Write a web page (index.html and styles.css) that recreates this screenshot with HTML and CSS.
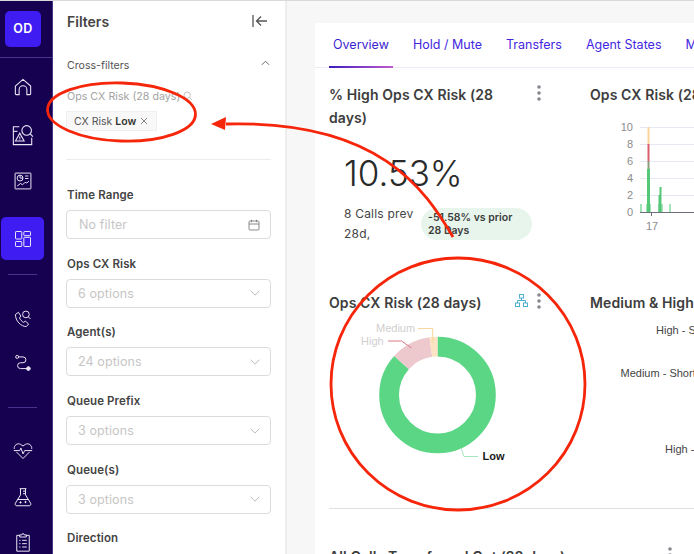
FILE: index.html
```html
<!DOCTYPE html>
<html lang="en">
<head>
  <meta charset="UTF-8">
  <meta name="viewport" content="width=device-width, initial-scale=1.0">
  <title>Ops CX Risk dashboard</title>
  <link rel="stylesheet" href="styles.css">
</head>
<body>

  <!-- left rail -->
  <nav class="rail">
    <div class="rail-logo-row">
      <div class="rail-logo">OD</div>
    </div>
    <a class="rail-item rail-home">
      <svg class="rail-icon rail-icon-sm" viewBox="0 0 20 20"><path d="M1.500 9 10 1.500 18.500 9v8.500a1 1 0 0 1-1 1h-3.200V13a4.300 4.300 0 0 0-8.600 0v5.500H2.500a1 1 0 0 1-1-1z"/></svg>
    </a>
    <a class="rail-item rail-search">
      <svg class="rail-icon rail-icon-lg" viewBox="0 0 24 24"><path d="M8 3H1.500v19.500h20V15"/><path d="M1.500 8H6"/><circle cx="16" cy="7" r="5.200"/><path d="m19.800 10.800 3 3"/><path d="M3.800 18.500 8.500 10l4.700 8.500z"/><path d="M8.500 13.500v2.500M8.500 17v.6"/></svg>
    </a>
    <a class="rail-item rail-report">
      <svg class="rail-icon" viewBox="0 0 24 24"><rect x="2.500" y="2.500" width="19" height="19" rx=".5"/><circle cx="8.500" cy="8.500" r="3.500"/><path d="M8.500 5v3.500h3.500"/><path d="M14.500 6h4M14.500 9h4"/><path d="M5 18l4-3 2.500 1.500 3-3 2 1 2.500-2.500"/></svg>
    </a>
    <a class="rail-item rail-active">
      <svg class="rail-icon" viewBox="0 0 24 24"><rect x="3" y="3" width="7.500" height="9" rx=".8"/><rect x="13" y="3" width="8" height="5" rx=".8"/><rect x="13" y="10" width="8" height="11" rx=".8"/><rect x="3" y="15" width="7.500" height="6" rx=".8"/></svg>
    </a>
    <div class="rail-divider rail-divider-a"></div>
    <a class="rail-item rail-phone">
      <svg class="rail-icon" viewBox="0 0 24 24"><path d="M3 6.500 6.500 4l3 4.500-1.700 2c.8 2.500 2.700 4.500 5 5.500l2-1.500 4 3.500-2.800 3c-6 .5-13.500-7-13-14.500z"/><circle cx="15.500" cy="6.500" r="4"/><path d="m18.500 9.500 2.500 2.500"/></svg>
    </a>
    <a class="rail-item rail-route">
      <svg class="rail-icon" viewBox="0 0 24 24"><circle cx="5" cy="3.500" r="1.800"/><path d="M6.800 3.500h5.200a3.500 3.500 0 0 1 0 7H9a3.500 3.500 0 0 0 0 7h8"/><circle class="rail-fill" cx="18.500" cy="17.500" r="2.200"/></svg>
    </a>
    <div class="rail-divider rail-divider-b"></div>
    <a class="rail-item rail-heart">
      <svg class="rail-icon" viewBox="0 0 24 24"><path d="M1.500 9.500C1 5 5.500 2 9 4l3 2 3-2c3.500-2 8 1 7.500 5.500"/><path d="M4 13l8 8 8-8"/><path d="M1 11.500h7l1.500-3 2.500 7 2-4h9"/></svg>
    </a>
    <a class="rail-item rail-flask">
      <svg class="rail-icon" viewBox="0 0 24 24"><path d="M8 2h8"/><path d="M9 2v7.500L2.800 19.500c-.7 1.500.2 3 1.700 3h15c1.500 0 2.400-1.500 1.700-3L15 9.500V2"/><path d="M5.500 15h13"/><path d="M12 5h3M12 8h3"/><circle class="rail-fill" cx="9" cy="18.500" r=".8"/><circle class="rail-fill" cx="15" cy="18" r=".8"/></svg>
    </a>
    <a class="rail-item rail-clipboard">
      <svg class="rail-icon" viewBox="0 0 24 24"><path d="M8 4H4.500v19h15V4H16"/><path d="M8 6V3.500h2.500a1.500 1.500 0 0 1 3 0H16V6z"/><path d="M7.500 10h1.500M11 10h5.500M7.500 14h1.500M11 14h5.500M7.500 18h1.500M11 18h5.500"/></svg>
    </a>
  </nav>

  <!-- filter panel -->
  <aside class="filters">
    <div class="filters-head">
      <h2 class="filters-title">Filters</h2>
      <svg class="collapse-icon" viewBox="0 0 16 14"><path d="M1 1v12M15 7H4.500M9 2.500 4.500 7 9 11.500"/></svg>
    </div>
    <div class="cross-head">
      <span>Cross-filters</span>
      <svg class="cross-chevron" viewBox="0 0 10 6"><path d="M1 5 5 1l4 4"/></svg>
    </div>
    <div class="cross-label">
      <span>Ops CX Risk (28 days)</span>
      <svg class="cross-search" viewBox="0 0 10 10"><circle cx="4.200" cy="4.200" r="3.200"/><path d="m6.600 6.600 2.600 2.600"/></svg>
    </div>
    <div class="chip">
      <span>CX Risk <b>Low</b></span>
      <svg class="chip-close" viewBox="0 0 8 8"><path d="m1 1 6 6M7 1 1 7"/></svg>
    </div>
    <div class="filters-divider"></div>

    <div class="field">
      <label class="field-label">Time Range</label>
      <div class="field-box field-box-date">
        <span>No filter</span>
        <svg class="date-icon" viewBox="0 0 12 12"><rect x="1" y="2" width="10" height="9" rx="1"/><path d="M1 5h10M3.500 .8v2.400M8.500 .8v2.400"/></svg>
      </div>
    </div>
    <div class="field">
      <label class="field-label">Ops CX Risk</label>
      <div class="field-box">
        <span>6 options</span>
        <svg class="select-icon" viewBox="0 0 10 6"><path d="m.7.7 4.300 4.500L9.300.7"/></svg>
      </div>
    </div>
    <div class="field">
      <label class="field-label">Agent(s)</label>
      <div class="field-box">
        <span>24 options</span>
        <svg class="select-icon" viewBox="0 0 10 6"><path d="m.7.7 4.300 4.500L9.300.7"/></svg>
      </div>
    </div>
    <div class="field">
      <label class="field-label">Queue Prefix</label>
      <div class="field-box">
        <span>3 options</span>
        <svg class="select-icon" viewBox="0 0 10 6"><path d="m.7.7 4.300 4.500L9.300.7"/></svg>
      </div>
    </div>
    <div class="field">
      <label class="field-label">Queue(s)</label>
      <div class="field-box">
        <span>3 options</span>
        <svg class="select-icon" viewBox="0 0 10 6"><path d="m.7.7 4.300 4.500L9.300.7"/></svg>
      </div>
    </div>
    <div class="field">
      <label class="field-label">Direction</label>
    </div>
  </aside>

  <!-- dashboard -->
  <main class="main">
    <div class="card">
      <div class="tabs">
        <a class="tab tab-active">Overview</a>
        <a class="tab">Hold / Mute</a>
        <a class="tab">Transfers</a>
        <a class="tab">Agent States</a>
        <a class="tab">Metrics</a>
      </div>

      <div class="widget-row widget-row-top">
        <section class="widget">
          <div class="widget-head">
            <h3 class="widget-title">% High Ops CX Risk (28 days)</h3>
            <svg class="kebab" viewBox="0 0 4 16"><circle cx="2" cy="2" r="1.800"/><circle cx="2" cy="8" r="1.800"/><circle cx="2" cy="14" r="1.800"/></svg>
          </div>
          <div class="metric">
            <div class="metric-value">10.53%</div>
            <div class="metric-foot">
              <div class="metric-prev">8 Calls prev 28d,</div>
              <div class="metric-pill">-51.58% vs prior 28 Days</div>
            </div>
          </div>
        </section>
        <section class="widget">
          <div class="widget-head">
            <h3 class="widget-title widget-title-line">Ops CX Risk (28 days)</h3>
          </div>
          <svg class="bar-chart" viewBox="0 0 104 122">
            <g class="grid-lines">
              <path d="M50 11.500H104M50 28.500H104M50 45.500H104M50 62.500H104M50 79.500H104"/>
            </g>
            <g class="axis-labels">
              <text x="43" y="15">10</text>
              <text x="43" y="32">8</text>
              <text x="43" y="49">6</text>
              <text x="43" y="66">4</text>
              <text x="43" y="83">2</text>
              <text x="43" y="100">0</text>
            </g>
            <rect class="bar-low-light" x="50" y="88" width="2" height="8"/>
            <rect class="bar-low-light" x="56" y="88" width="5" height="8"/>
            <rect class="bar-low-light" x="68" y="88" width="5" height="8"/>
            <rect class="bar-low-light" x="79" y="88" width="2" height="8"/>
            <rect class="bar-medium" x="57.500" y="11" width="2" height="17"/>
            <rect class="bar-high" x="57.500" y="28" width="2" height="17"/>
            <rect class="bar-mixed" x="57.500" y="45" width="2" height="8"/>
            <rect class="bar-low" x="57" y="53" width="3" height="43"/>
            <rect class="bar-low" x="68.500" y="79" width="2" height="17"/>
            <rect class="bar-low" x="69.500" y="71" width="2" height="25"/>
            <path class="axis-line" d="M50 96.500H104M61.500 96v4"/>
            <text class="axis-tick" x="62" y="114">17</text>
          </svg>
        </section>
      </div>

      <div class="widget-row widget-row-mid">
        <section class="widget">
          <div class="widget-head">
            <h3 class="widget-title widget-title-line">Ops CX Risk (28 days)</h3>
            <svg class="tree-icon" viewBox="0 0 13 13"><rect x="4.500" y=".5" width="4" height="3.500"/><rect x=".5" y="9" width="4" height="3.500"/><rect x="8.500" y="9" width="4" height="3.500"/><path d="M6.500 4v2.500M2.500 9V6.500h8V9"/></svg>
            <svg class="kebab" viewBox="0 0 4 16"><circle cx="2" cy="2" r="1.800"/><circle cx="2" cy="8" r="1.800"/><circle cx="2" cy="14" r="1.800"/></svg>
          </div>
          <svg class="donut" viewBox="0 0 200 150">
            <g transform="rotate(-90 108.500 81)" fill="none" stroke-width="19.800">
              <circle class="slice-low" cx="108.500" cy="81" r="48.400" pathLength="360" stroke-dasharray="312 360"/>
              <circle class="slice-high" cx="108.500" cy="81" r="48.400" pathLength="360" stroke-dasharray="40 360" stroke-dashoffset="-312"/>
              <circle class="slice-medium" cx="108.500" cy="81" r="48.400" pathLength="360" stroke-dasharray="8 360" stroke-dashoffset="-352"/>
            </g>
            <path class="leader-medium" d="M89 14.500h14.500l.5 14"/>
            <path class="leader-high" d="M59 27h13.500l10 7"/>
            <path class="leader-low" d="M132 134l3 8.500h14"/>
            <text class="donut-label" x="47" y="18">Medium</text>
            <text class="donut-label" x="32" y="31">High</text>
            <text class="donut-label-strong" x="153.500" y="146">Low</text>
          </svg>
        </section>
        <section class="widget">
          <div class="widget-head">
            <h3 class="widget-title widget-title-line">Medium &amp; High Risk</h3>
          </div>
          <svg class="hbar-chart" viewBox="0 0 104 150">
            <text x="66" y="20">High - Short</text>
            <text x="30.500" y="63">Medium - Short</text>
            <text x="75" y="139">High - Long</text>
          </svg>
        </section>
      </div>

      <div class="widget-row widget-row-bottom">
        <section class="widget widget-wide">
          <div class="widget-head">
            <h3 class="widget-title widget-title-line">All Calls Transferred Out (28 days)</h3>
            <svg class="kebab" viewBox="0 0 4 16"><circle cx="2" cy="2" r="1.800"/><circle cx="2" cy="8" r="1.800"/><circle cx="2" cy="14" r="1.800"/></svg>
          </div>
        </section>
      </div>
    </div>
  </main>

  <!-- red hand-drawn markup on top of the screenshot -->
  <svg class="markup" viewBox="0 0 694 554">
    <ellipse cx="121.500" cy="112" rx="74" ry="29" transform="rotate(2 121.500 112)"/>
    <ellipse cx="458" cy="384" rx="127" ry="126"/>
    <path d="M453 237C425 190 380 120 226 124"/>
    <path class="markup-head" d="M211 124 226 117 225 130z"/>
  </svg>

</body>
</html>
```

FILE: styles.css
```css
* {
  box-sizing: border-box;
}

html, body {
  height: 554px;
}

body {
  margin: 0;
  position: relative;
  display: flex;
  overflow: hidden;
  font-family: Inter, "Liberation Sans", sans-serif;
  color: #3d3d3d;
  background-color: #f7f7f7;
  border-top: 1px solid #d9d9d9;
}

h2, h3 {
  margin: 0;
}

/* left rail */
.rail {
  flex: 0 0 53px;
  position: relative;
  background-color: #150150;
  border-right: 1px solid #46358a;
}

.rail-logo-row {
  height: 57px;
  padding: 10px 0 0 5px;
  border-bottom: 1px solid #46358a;
}

.rail-logo {
  width: 36px;
  height: 36px;
  border-radius: 5px;
  background-color: #3f1df2;
  color: #fff;
  font-size: 12.500px;
  font-weight: 600;
  letter-spacing: .5px;
  line-height: 36px;
  text-align: center;
}

.rail-item {
  display: flex;
  align-items: center;
  justify-content: center;
  width: 46px;
  height: 46px;
}

.rail-home { margin-top: 6px; }
.rail-search { margin-top: 2px; }

.rail-active {
  width: 43px;
  height: 43px;
  margin: 13px 0 0 1px;
  border-radius: 5px;
  background-color: #3f1df2;
}

.rail-phone { margin-top: 21px; }
.rail-route { margin-top: -1px; }
.rail-heart { margin-top: 20px; }
.rail-clipboard { margin-top: -1px; }

.rail-icon {
  width: 20px;
  height: 20px;
  fill: none;
  stroke: #e9e6f5;
  stroke-width: 1.200;
}

.rail-icon-sm {
  width: 18px;
  height: 18px;
}

.rail-icon-lg {
  width: 22px;
  height: 22px;
}

.rail-fill {
  fill: #e9e6f5;
}

.rail-divider {
  width: 29px;
  height: 1px;
  margin-left: 8px;
  background-color: #46358a;
}

.rail-divider-a { margin-top: 14px; }
.rail-divider-b { margin-top: 20px; }

/* filter panel */
.filters {
  flex: 0 0 234px;
  height: 553px;
  padding: 10px 14px 0 13px;
  background-color: #fff;
  border-right: 2px solid #eeeeee;
  overflow: hidden;
}

.filters-head {
  display: flex;
  align-items: center;
  justify-content: space-between;
  height: 20px;
  padding: 0 3px 0 1px;
}

.filters-title {
  font-size: 14px;
  font-weight: 600;
  color: #444;
}

.collapse-icon {
  width: 16px;
  height: 14px;
  fill: none;
  stroke: #555;
  stroke-width: 1.300;
}

.cross-head {
  display: flex;
  align-items: center;
  justify-content: space-between;
  height: 16px;
  margin-top: 26px;
  padding-left: 1px;
  font-size: 10.600px;
  color: #555;
}

.cross-chevron {
  width: 9px;
  height: 6px;
  margin: 0 1px 4px 0;
  fill: none;
  stroke: #555;
  stroke-width: 1;
}

.cross-label {
  display: flex;
  align-items: center;
  gap: 3px;
  height: 16px;
  margin-top: 15px;
  padding-left: 1px;
  font-size: 10.700px;
  color: #a3a3a3;
}

.cross-search {
  width: 10px;
  height: 10px;
  fill: none;
  stroke: #c4c4c4;
  stroke-width: 1;
}

.chip {
  display: inline-flex;
  align-items: center;
  gap: 4px;
  width: 91px;
  height: 20px;
  margin-top: 7px;
  padding-left: 7px;
  font-size: 10.500px;
  color: #555;
  background-color: #f8f8f8;
  border: 1px solid #efefef;
}

.chip b {
  font-weight: 600;
  color: #333;
}

.chip-close {
  width: 8px;
  height: 8px;
  fill: none;
  stroke: #777;
  stroke-width: .9;
}

.filters-divider {
  height: 1px;
  margin: 28px 0 27px;
  background-color: #ececec;
}

.field {
  padding-bottom: 16.700px;
}

.field-label {
  display: block;
  height: 16px;
  margin-bottom: 7px;
  padding-left: 1px;
  font-size: 11.500px;
  font-weight: 600;
  line-height: 16px;
  color: #444;
  letter-spacing: .1px;
}

.field-box {
  display: flex;
  align-items: center;
  justify-content: space-between;
  height: 29px;
  padding: 0 10px 0 11px;
  font-size: 12.500px;
  color: #c6c6c6;
  border: 1px solid #dcdcdc;
  border-radius: 4px;
  letter-spacing: .1px;
}

.field-box-date {
  padding-left: 12px;
}

.date-icon {
  width: 12px;
  height: 12px;
  fill: none;
  stroke: #7e7e7e;
  stroke-width: .9;
}

.select-icon {
  width: 10px;
  height: 6px;
  fill: none;
  stroke: #bdbdbd;
  stroke-width: 1;
}

/* dashboard */
.main {
  flex: 1;
  min-width: 0;
  padding: 22px 0 0 28px;
  background-color: #f7f7f7;
  overflow: hidden;
}

.card {
  width: 700px;
  height: 540px;
  padding-left: 14px;
  background-color: #fff;
}

.tabs {
  display: flex;
  gap: 16px;
  height: 45px;
  margin-left: -14px;
  padding-left: 14px;
  border-bottom: 1px solid #eceaf3;
}

.tab {
  height: 45px;
  padding: 0 4px;
  font-size: 12.500px;
  line-height: 43px;
  color: #4426e0;
  white-space: nowrap;
}

.tab-active {
  width: 64px;
  border-bottom: 2px solid;
  border-image: linear-gradient(90deg, #3a1cc0, #c45ccb) 1;
  color: #3a1fd0;
}

.widget-row {
  display: flex;
}

.widget-row-top {
  height: 208px;
  padding-top: 15px;
  box-sizing: content-box;
}

.widget-row-mid {
  height: 218px;
  border-bottom: 1px solid #e1e1e1;
}

.widget-row-bottom {
  margin-top: 36px;
}

.widget {
  flex: 0 0 261px;
  padding-right: 49px;
}

.widget-wide {
  flex-basis: 343px;
  padding-right: 0;
}

.widget-head {
  display: flex;
  align-items: flex-start;
  gap: 9px;
}

.widget-title {
  flex: 1;
  font-size: 14px;
  font-weight: 600;
  line-height: 23px;
  color: #3d3d3d;
  letter-spacing: .1px;
}

.widget-title-line {
  white-space: nowrap;
}

.kebab {
  flex: none;
  width: 4px;
  height: 16px;
  margin-top: 2px;
  fill: #85888f;
}

.tree-icon {
  flex: none;
  width: 13px;
  height: 13px;
  margin-top: 3px;
  fill: none;
  stroke: #4fb0d0;
  stroke-width: 1;
}

.metric {
  padding: 22px 0 0 15px;
}

.metric-value {
  font-size: 35px;
  font-weight: 300;
  line-height: 44px;
  color: #2a2a2a;
}

.metric-foot {
  display: flex;
  align-items: center;
  gap: 6px;
  margin-top: 9px;
}

.metric-prev {
  flex: 0 0 71px;
  font-size: 12px;
  line-height: 20px;
  color: #444;
  letter-spacing: .2px;
}

.metric-pill {
  flex: 0 0 111px;
  height: 32px;
  padding: 3px 7px;
  font-size: 10.500px;
  font-weight: 600;
  line-height: 13px;
  color: #3d3d3d;
  background-color: #e7f5ec;
  border-radius: 16px;
}

/* charts */
.bar-chart {
  display: block;
  width: 104px;
  height: 122px;
  margin-top: 10px;
}

.grid-lines path {
  fill: none;
  stroke: #e6e9f5;
  stroke-width: 1;
}

.axis-labels text {
  font-family: "Liberation Sans", sans-serif;
  font-size: 11px;
  fill: #8c8c8c;
  text-anchor: end;
}

.axis-line {
  fill: none;
  stroke: #6e7079;
  stroke-width: 1;
}

.axis-tick {
  font-family: "Liberation Sans", sans-serif;
  font-size: 11px;
  fill: #8c8c8c;
  text-anchor: middle;
}

.bar-low { fill: #55c878; }
.bar-low-light { fill: #a2e3b6; }
.bar-medium { fill: #fdd39b; }
.bar-high { fill: #d9606c; }
.bar-mixed { fill: #8d9c7c; }

.donut {
  display: block;
  width: 200px;
  height: 150px;
}

.slice-low { stroke: #5bd685; }
.slice-high { stroke: #edc8cd; }
.slice-medium { stroke: #fbe3c4; }

.leader-medium,
.leader-high,
.leader-low {
  fill: none;
  stroke-width: 1;
}

.leader-medium { stroke: #fdd69f; }
.leader-high { stroke: #d87a86; }
.leader-low { stroke: #a5e5bb; }

.donut-label {
  font-family: "Liberation Sans", sans-serif;
  font-size: 11px;
  fill: #cfcfcf;
}

.donut-label-strong {
  font-family: "Liberation Sans", sans-serif;
  font-size: 11px;
  font-weight: 700;
  fill: #1a1a1a;
}

.hbar-chart {
  display: block;
  width: 104px;
  height: 150px;
  overflow: hidden;
}

.hbar-chart text {
  font-family: "Liberation Sans", sans-serif;
  font-size: 11px;
  fill: #444;
}

/* markup layer */
.markup {
  position: absolute;
  top: -1px;
  left: 0;
  width: 694px;
  height: 554px;
  fill: none;
  stroke: #f5260a;
  stroke-width: 2.800;
  pointer-events: none;
}

.markup-head {
  fill: #f5260a;
  stroke: none;
}
```
